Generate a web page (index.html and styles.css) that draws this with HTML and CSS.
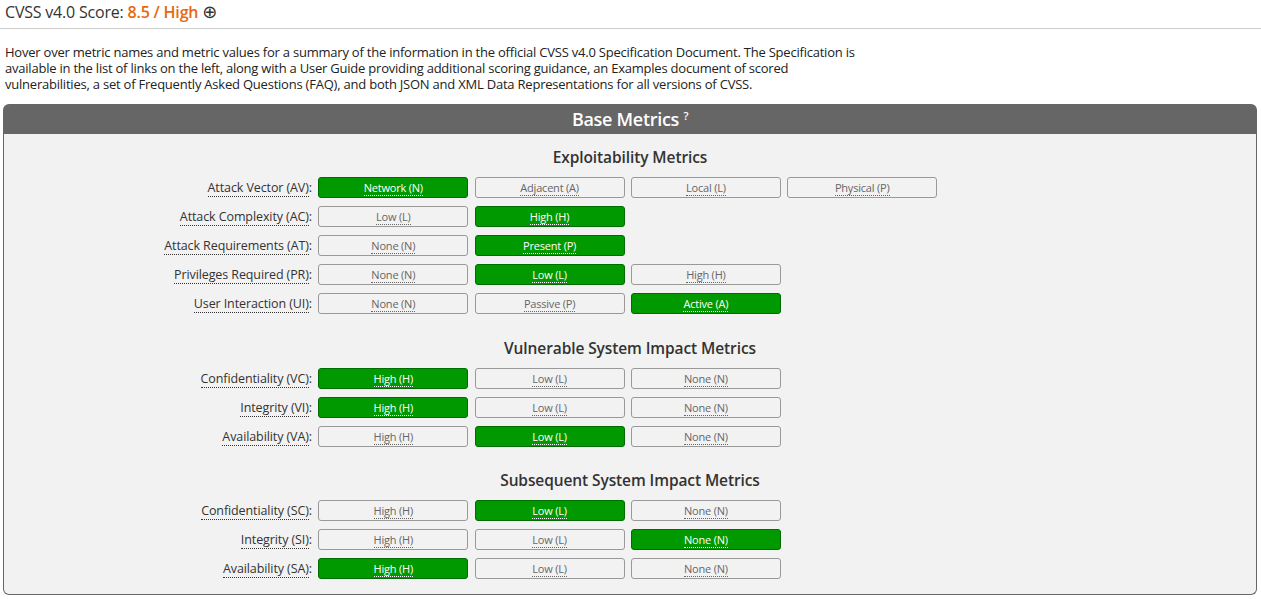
FILE: index.html
```html
<!DOCTYPE html>
<html>
<head>
<meta charset="utf-8">
<link rel="stylesheet" href="styles.css">
</head>
<body>
<div class="score-bar">CVSS v4.0 Score: <span class="score">8.5 / High</span> <span class="plus">⊕</span></div>
<p class="intro">Hover over metric names and metric values for a summary of the information in the official CVSS v4.0 Specification Document. The Specification is<br>available in the list of links on the left, along with a User Guide providing additional scoring guidance, an Examples document of scored<br>vulnerabilities, a set of Frequently Asked Questions (FAQ), and both JSON and XML Data Representations for all versions of CVSS.</p>
<div class="panel">
  <div class="panel-head">Base Metrics <sup class="q">?</sup></div>
  <div class="panel-body">
    <section class="group">
      <h3 class="group-title">Exploitability Metrics</h3>
      <div class="rows">
        <div class="row"><span class="label"><abbr>Attack Vector (AV)</abbr>:</span>
          <button class="opt on"><abbr>Network (N)</abbr></button><button class="opt"><abbr>Adjacent (A)</abbr></button><button class="opt"><abbr>Local (L)</abbr></button><button class="opt"><abbr>Physical (P)</abbr></button></div>
        <div class="row"><span class="label"><abbr>Attack Complexity (AC)</abbr>:</span>
          <button class="opt"><abbr>Low (L)</abbr></button><button class="opt on"><abbr>High (H)</abbr></button></div>
        <div class="row"><span class="label"><abbr>Attack Requirements (AT)</abbr>:</span>
          <button class="opt"><abbr>None (N)</abbr></button><button class="opt on"><abbr>Present (P)</abbr></button></div>
        <div class="row"><span class="label"><abbr>Privileges Required (PR)</abbr>:</span>
          <button class="opt"><abbr>None (N)</abbr></button><button class="opt on"><abbr>Low (L)</abbr></button><button class="opt"><abbr>High (H)</abbr></button></div>
        <div class="row"><span class="label"><abbr>User Interaction (UI)</abbr>:</span>
          <button class="opt"><abbr>None (N)</abbr></button><button class="opt"><abbr>Passive (P)</abbr></button><button class="opt on"><abbr>Active (A)</abbr></button></div>
      </div>
    </section>
    <section class="group">
      <h3 class="group-title">Vulnerable System Impact Metrics</h3>
      <div class="rows">
        <div class="row"><span class="label"><abbr>Confidentiality (VC)</abbr>:</span>
          <button class="opt on"><abbr>High (H)</abbr></button><button class="opt"><abbr>Low (L)</abbr></button><button class="opt"><abbr>None (N)</abbr></button></div>
        <div class="row"><span class="label"><abbr>Integrity (VI)</abbr>:</span>
          <button class="opt on"><abbr>High (H)</abbr></button><button class="opt"><abbr>Low (L)</abbr></button><button class="opt"><abbr>None (N)</abbr></button></div>
        <div class="row"><span class="label"><abbr>Availability (VA)</abbr>:</span>
          <button class="opt"><abbr>High (H)</abbr></button><button class="opt on"><abbr>Low (L)</abbr></button><button class="opt"><abbr>None (N)</abbr></button></div>
      </div>
    </section>
    <section class="group">
      <h3 class="group-title">Subsequent System Impact Metrics</h3>
      <div class="rows">
        <div class="row"><span class="label"><abbr>Confidentiality (SC)</abbr>:</span>
          <button class="opt"><abbr>High (H)</abbr></button><button class="opt on"><abbr>Low (L)</abbr></button><button class="opt"><abbr>None (N)</abbr></button></div>
        <div class="row"><span class="label"><abbr>Integrity (SI)</abbr>:</span>
          <button class="opt"><abbr>High (H)</abbr></button><button class="opt"><abbr>Low (L)</abbr></button><button class="opt on"><abbr>None (N)</abbr></button></div>
        <div class="row"><span class="label"><abbr>Availability (SA)</abbr>:</span>
          <button class="opt on"><abbr>High (H)</abbr></button><button class="opt"><abbr>Low (L)</abbr></button><button class="opt"><abbr>None (N)</abbr></button></div>
      </div>
    </section>
  </div>
</div>
</body>
</html>
```
FILE: styles.css
```css
* { box-sizing: border-box; }
body {
  margin: 0;
  font-family: "Open Sans", "Noto Sans", sans-serif;
  color: #333;
  background: #fff;
}
.score-bar {
  height: 29px;
  padding: 1px 5px 0;
  font-size: 16px;
  line-height: 22px;
  border-bottom: 1px solid #ccc;
  letter-spacing: -0.2px;
}
.score { color: #e8680f; font-weight: 600; }
.plus { font-family: "DejaVu Sans", sans-serif; font-size: 18px; color: #333; line-height: 0; }
.intro {
  margin: 15px 0 0;
  padding: 0 5px;
  font-size: 13px;
  line-height: 16px;
  white-space: nowrap;
  color: #222;
  letter-spacing: -0.22px;
}
.panel {
  margin: 12px 4px 0 3px;
}
.panel-head {
  height: 30px;
  background: #666;
  color: #fff;
  font-size: 18px;
  font-weight: 600;
  text-align: center;
  line-height: 31px;
  border-radius: 6px 6px 0 0;
  letter-spacing: -0.3px;
}
.q { font-size: 11px; vertical-align: 6px; line-height: 0; }
.panel-body {
  background: #f2f2f2;
  border: 1px solid #666;
  border-top: 0;
  border-radius: 0 0 6px 6px;
  padding: 13px 0 15px;
}
.group + .group { margin-top: 23.5px; }
.group-title {
  margin: 0 0 10px;
  text-align: center;
  font-size: 15.5px;
  font-weight: 600;
  line-height: 20px;
  color: #333;
  letter-spacing: -0.1px;
}
.rows { display: flex; flex-direction: column; gap: 8px; }
.row {
  display: grid;
  grid-template-columns: 308px repeat(4, 150px);
  column-gap: 6.3px;
  align-items: center;
  height: 21px;
}
.label {
  text-align: right;
  font-size: 12.5px;
  color: #333;
  letter-spacing: -0.1px;
  white-space: nowrap;
}
abbr {
  text-decoration: none;
  border-bottom: 1px dotted currentColor;
}
.label abbr { border-bottom-color: #333; }
.opt {
  height: 21px;
  margin: 0;
  padding: 1px 0 0;
  border: 1px solid #999;
  border-radius: 3px;
  background: #f2f2f2;
  color: #666;
  font-family: "Open Sans", "Noto Sans", sans-serif;
  font-size: 11px;
  line-height: 14px;
  letter-spacing: -0.2px;
}
.opt.on {
  background: #009900;
  border-color: #006d00;
  color: #fff;
}
```
